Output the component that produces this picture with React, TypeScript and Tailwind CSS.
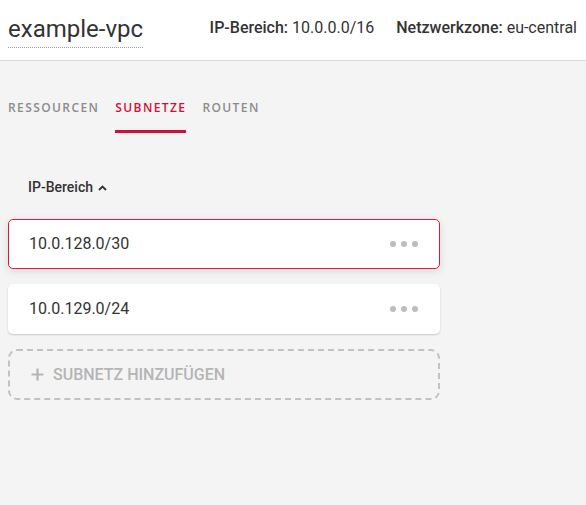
import React from "react";

function Dots() {
  return (
    <div className="flex items-center gap-[5px]">
      <span className="block w-[6px] h-[6px] rounded-full bg-[#bdbdbd]" />
      <span className="block w-[6px] h-[6px] rounded-full bg-[#bdbdbd]" />
      <span className="block w-[6px] h-[6px] rounded-full bg-[#bdbdbd]" />
    </div>
  );
}

export default function App() {
  const roboto = { fontFamily: "Roboto, 'Liberation Sans', sans-serif" };
  return (
    <div className="w-[586px] h-[505px] bg-[#f4f4f4] overflow-hidden" style={roboto}>
      <header className="h-[61px] bg-white border-b border-[#dadada] flex items-center pl-[8px] pr-[9px]">
        <div className="text-[24px] leading-[30px] text-[#333] border-b border-dotted border-[#9a9a9a] pb-[3px] mt-[2px]">
          example-vpc
        </div>
        <div className="ml-auto flex items-center gap-[22px] text-[16px] text-[#333] pb-[4px]">
          <div>
            <span className="font-medium">IP-Bereich:</span> 10.0.0.0/16
          </div>
          <div>
            <span className="font-medium">Netzwerkzone:</span> eu-central
          </div>
        </div>
      </header>

      <main className="px-[8px]">
        <nav
          className="flex gap-[16px] mt-[38px] text-[12px] font-semibold tracking-[1.4px] leading-[17px]"
          style={{ fontFamily: "'Open Sans', sans-serif" }}
        >
          <div className="pb-[14px] text-[#8c8c8c] border-b-[3px] border-transparent">RESSOURCEN</div>
          <div className="pb-[14px] text-[#d0103a] border-b-[3px] border-[#d0103a]">SUBNETZE</div>
          <div className="pb-[14px] text-[#8c8c8c] border-b-[3px] border-transparent">ROUTEN</div>
        </nav>

        <div className="mt-[44px] pl-[20px] flex items-center gap-[5px] text-[14px] leading-[20px] font-medium text-[#333]">
          <span>IP-Bereich</span>
          <svg width="9" height="6" viewBox="0 0 9 6" className="mt-[1px]">
            <path d="M1 5 L4.5 1.5 L8 5" fill="none" stroke="#333" strokeWidth="1.8" />
          </svg>
        </div>

        <div className="mt-[22px] w-[432px] flex flex-col gap-[15px]">
          <div className="h-[50px] bg-white rounded-[5px] border border-[#e3173e] shadow-[0_2px_8px_rgba(0,0,0,0.12)] flex items-center pl-[20px] pr-[21px]">
            <span className="text-[16px] text-[#333]">10.0.128.0/30</span>
            <div className="ml-auto"><Dots /></div>
          </div>
          <div className="h-[50px] bg-white rounded-[5px] border border-transparent shadow-[0_1px_2px_rgba(0,0,0,0.18)] flex items-center pl-[20px] pr-[21px]">
            <span className="text-[16px] text-[#333]">10.0.129.0/24</span>
            <div className="ml-auto"><Dots /></div>
          </div>
          <div className="h-[51px] rounded-[9px] border-2 border-dashed border-[#c2c2c2] flex items-center pl-[21px] gap-[9px] text-[#b5b5b5]">
            <svg width="13" height="13" viewBox="0 0 13 13">
              <path d="M6.5 0.5 V12.5 M0.5 6.5 H12.5" stroke="#b5b5b5" strokeWidth="2.2" />
            </svg>
            <span className="text-[16px] font-medium">SUBNETZ HINZUFÜGEN</span>
          </div>
        </div>
      </main>
    </div>
  );
}
